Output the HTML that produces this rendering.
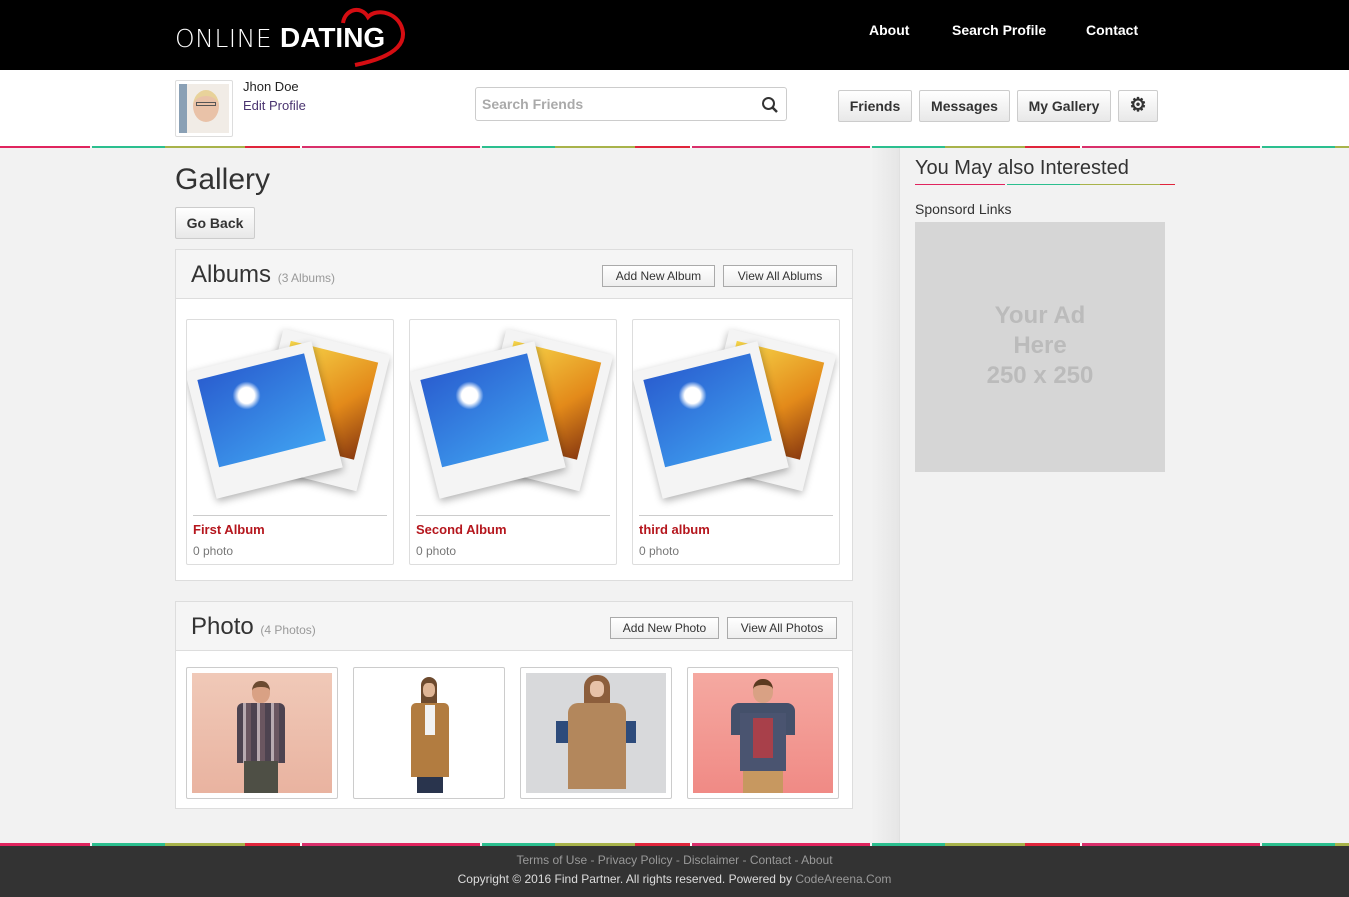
<!DOCTYPE html>
<html><head><meta charset="utf-8"><style>
*{box-sizing:border-box;margin:0;padding:0}
body{width:1349px;height:897px;overflow:hidden;background:#f2f2f2;font-family:"Liberation Sans",Arial,sans-serif;position:relative;color:#333}
.abs{position:absolute}
.hdr{left:0;top:0;width:1349px;height:70px;background:#000}
.logo{left:175px;top:20px;color:#fff;font-size:28px;line-height:36px;white-space:nowrap}
.nav a{position:absolute;top:22px;color:#fff;font-weight:bold;font-size:14px;text-decoration:none}
.bar{left:0;top:70px;width:1349px;height:76px;background:#fff}
.stripe{left:0;width:1349px;height:2px;background:repeating-linear-gradient(90deg,#e0245e 0 90px,#f5f5f5 90px 92px,#2bbf8f 92px 165px,#a8b34a 165px 245px,#e0253b 245px 300px,#fff 300px 302px,#d92f6b 302px 390px)}
.btn{position:absolute;border:1px solid #ccc;border-radius:2px;background:linear-gradient(#fff,#e8e8e8);font-weight:bold;font-size:14px;color:#333;text-align:center}
.panel{position:absolute;left:175px;width:678px;border:1px solid #ddd;background:#fff}
.ph{height:49px;background:#f5f5f5;border-bottom:1px solid #ddd;position:relative}
.ph h2{position:absolute;left:15px;top:11px;font-weight:normal;font-size:24px;color:#333}
.ph h2 small{font-size:12px;color:#999}
.sb{position:absolute;top:15px;height:22px;border:1px solid #aaa;background:linear-gradient(#fff,#eee);font-size:12px;line-height:20px;text-align:center;color:#333}
.card{position:absolute;top:69px;width:208px;height:246px;border:1px solid #ddd;border-radius:2px;background:#fff;overflow:hidden}
.card .t{position:absolute;left:6px;top:202px;color:#b5161d;font-weight:bold;font-size:13px}
.card .c{position:absolute;left:6px;top:224px;color:#777;font-size:12px}
.card .hr{position:absolute;left:6px;right:6px;top:195px;border-top:1px solid #ccc}
.pol{position:absolute;background:#f4f4f4;box-shadow:0 3px 8px rgba(0,0,0,.3);padding:10px 10px 30px}
.pol div{width:100%;height:100%}
.ptile{position:absolute;top:65px;width:152px;height:132px;border:1px solid #ccc;border-radius:2px;background:#fff}
.pimg{position:absolute;left:5px;top:5px;width:140px;height:120px;overflow:hidden}
.fig div{position:absolute}
</style></head><body>
<div class="abs hdr"></div>
<svg class="abs" style="left:335px;top:3px" width="75" height="65" viewBox="0 0 75 65"><path d="M8 20 C10 6 26 2 33 14 C42 4 66 10 68 30 C69 46 50 56 20 62" fill="none" stroke="#d50d12" stroke-width="4"/></svg>
<div class="abs logo"><span style="font-family:'DejaVu Sans',sans-serif;font-weight:200;font-size:25px;letter-spacing:0.5px">ONLINE</span> <b>DATING</b></div>
<div class="nav"><a style="left:869px">About</a><a style="left:952px">Search Profile</a><a style="left:1086px">Contact</a></div>
<div class="abs bar"></div>
<div class="abs" style="left:175px;top:80px;width:58px;height:57px;border:1px solid #ddd;border-radius:2px;background:#fff;padding:3px"><div style="width:50px;height:49px;background:linear-gradient(90deg,#8aa0b5 0 8px,#f1ece6 8px);position:relative"><div style="position:absolute;left:14px;top:6px;width:26px;height:32px;border-radius:50%;background:#e9c2a8;border-top:6px solid #e8d29a"></div><div style="position:absolute;left:17px;top:18px;width:20px;height:4px;border:1px solid #555"></div></div></div>
<div class="abs" style="left:243px;top:79px;font-size:13px;color:#222">Jhon Doe</div>
<div class="abs" style="left:243px;top:98px;font-size:13px;color:#4a3470">Edit Profile</div>
<div class="abs" style="left:475px;top:87px;width:312px;height:34px;border:1px solid #ccc;border-radius:3px;background:#fff;font-size:14px;color:#aaa;padding:8px 6px;font-weight:bold">Search Friends</div>
<svg class="abs" style="left:761px;top:96px" width="18" height="18"><circle cx="7.5" cy="7.5" r="5.5" fill="none" stroke="#333" stroke-width="2"/><path d="M11.5 11.5 L16 16" stroke="#333" stroke-width="2.5"/></svg>
<div class="btn" style="left:838px;top:90px;width:74px;height:32px;line-height:30px">Friends</div>
<div class="btn" style="left:919px;top:90px;width:91px;height:32px;line-height:30px">Messages</div>
<div class="btn" style="left:1017px;top:90px;width:94px;height:32px;line-height:30px">My Gallery</div>
<div class="btn" style="left:1118px;top:90px;width:40px;height:32px;line-height:30px;font-size:19px">⚙</div>
<div class="abs stripe" style="top:146px"></div>
<div class="abs" style="left:870px;top:148px;width:30px;height:695px;background:linear-gradient(90deg,#f2f2f2,#e6e6e6);border-right:1px solid #e0e0e0"></div>
<div class="abs" style="left:175px;top:163px;font-size:30px;color:#333">Gallery</div>
<div class="btn" style="left:175px;top:207px;width:80px;height:32px;line-height:30px;font-size:14px">Go Back</div>

<div class="panel" style="top:249px;height:332px">
<div class="ph"><h2>Albums <small>(3 Albums)</small></h2>
<div class="sb" style="left:426px;width:113px">Add New Album</div>
<div class="sb" style="left:547px;width:114px">View All Ablums</div></div>
<div class="card" style="left:10px"><div class="pol" style="left:78px;top:20px;width:110px;height:140px;transform:rotate(14deg)"><div style="background:linear-gradient(135deg,#f7d64a,#e38a1a 60%,#8a3a10)"></div></div><div class="pol" style="left:12px;top:35px;width:130px;height:130px;transform:rotate(-14deg)"><div style="background:radial-gradient(circle at 40% 30%,#fff 0 8px,transparent 14px),linear-gradient(160deg,#2a5fd0,#3fa0f0)"></div></div><div class="hr"></div><div class="t">First Album</div><div class="c">0 photo</div></div>
<div class="card" style="left:233px"><div class="pol" style="left:78px;top:20px;width:110px;height:140px;transform:rotate(14deg)"><div style="background:linear-gradient(135deg,#f7d64a,#e38a1a 60%,#8a3a10)"></div></div><div class="pol" style="left:12px;top:35px;width:130px;height:130px;transform:rotate(-14deg)"><div style="background:radial-gradient(circle at 40% 30%,#fff 0 8px,transparent 14px),linear-gradient(160deg,#2a5fd0,#3fa0f0)"></div></div><div class="hr"></div><div class="t">Second Album</div><div class="c">0 photo</div></div>
<div class="card" style="left:456px"><div class="pol" style="left:78px;top:20px;width:110px;height:140px;transform:rotate(14deg)"><div style="background:linear-gradient(135deg,#f7d64a,#e38a1a 60%,#8a3a10)"></div></div><div class="pol" style="left:12px;top:35px;width:130px;height:130px;transform:rotate(-14deg)"><div style="background:radial-gradient(circle at 40% 30%,#fff 0 8px,transparent 14px),linear-gradient(160deg,#2a5fd0,#3fa0f0)"></div></div><div class="hr"></div><div class="t">third album</div><div class="c">0 photo</div></div>
</div>

<div class="panel" style="top:601px;height:208px">
<div class="ph"><h2>Photo <small>(4 Photos)</small></h2>
<div class="sb" style="left:434px;width:109px">Add New Photo</div>
<div class="sb" style="left:551px;width:110px">View All Photos</div></div>
<div class="ptile" style="left:10px"><div class="pimg fig" style="background:linear-gradient(#f0c9b8,#e9b3a0)"><div style="left:60px;top:8px;width:18px;height:22px;border-radius:45%;background:#d9a184;border-top:6px solid #6b4a30"></div><div style="left:45px;top:30px;width:48px;height:60px;background:repeating-linear-gradient(90deg,#4d4350 0 6px,#b8aab0 6px 9px,#6a5660 9px 14px);border-radius:6px 6px 0 0"></div><div style="left:52px;top:88px;width:34px;height:32px;background:#4e4f45"></div></div></div>
<div class="ptile" style="left:177px"><div class="pimg fig" style="background:#fff"><div style="left:62px;top:4px;width:16px;height:30px;border-radius:8px 8px 4px 4px;background:#6d4a2e"></div><div style="left:64px;top:10px;width:12px;height:14px;border-radius:40%;background:#dfb595"></div><div style="left:52px;top:30px;width:38px;height:74px;background:#b27c40;border-radius:5px 5px 0 0"></div><div style="left:66px;top:32px;width:10px;height:30px;background:#f2f2f2"></div><div style="left:58px;top:104px;width:26px;height:16px;background:#29344d"></div></div></div>
<div class="ptile" style="left:344px"><div class="pimg fig" style="background:#d8d9db"><div style="left:58px;top:2px;width:26px;height:40px;border-radius:12px 12px 4px 4px;background:#8c5e3c"></div><div style="left:64px;top:8px;width:14px;height:16px;border-radius:40%;background:#e7c2a8"></div><div style="left:30px;top:48px;width:80px;height:22px;background:#2d4b7b"></div><div style="left:42px;top:30px;width:58px;height:86px;background:#b3875c;border-radius:10px 10px 0 0"></div></div></div>
<div class="ptile" style="left:511px"><div class="pimg fig" style="background:linear-gradient(#f5a9a1,#f08a85)"><div style="left:60px;top:6px;width:20px;height:24px;border-radius:45%;background:#d9a184;border-top:6px solid #5b3a20"></div><div style="left:38px;top:30px;width:64px;height:32px;background:#44506a;border-radius:8px 8px 0 0"></div><div style="left:47px;top:40px;width:46px;height:58px;background:#4a5470"></div><div style="left:60px;top:45px;width:20px;height:40px;background:#a8404a"></div><div style="left:50px;top:98px;width:40px;height:22px;background:#c79860"></div></div></div>
</div>

<div class="abs" style="left:915px;top:157px;font-size:20px;color:#333">You May also Interested</div>
<div class="abs stripe" style="left:915px;top:184px;width:260px;height:1px"></div>
<div class="abs" style="left:915px;top:201px;font-size:14px;color:#333">Sponsord Links</div>
<div class="abs" style="left:915px;top:222px;width:250px;height:250px;background:#d6d6d6;color:#bbb;font-weight:bold;font-size:24px;text-align:center;padding-top:79px;line-height:30px">Your Ad<br>Here<br>250 x 250</div>

<div class="abs stripe" style="top:843px;height:3px"></div>
<div class="abs" style="left:0;top:846px;width:1349px;height:51px;background:#333;text-align:center;font-size:12px">
<div style="margin-top:7px;color:#999">Terms of Use - Privacy Policy - Disclaimer - Contact - About</div>
<div style="margin-top:5px;color:#ddd">Copyright © 2016 Find Partner. All rights reserved. Powered by <span style="color:#999">CodeAreena.Com</span></div></div>
</body></html>
